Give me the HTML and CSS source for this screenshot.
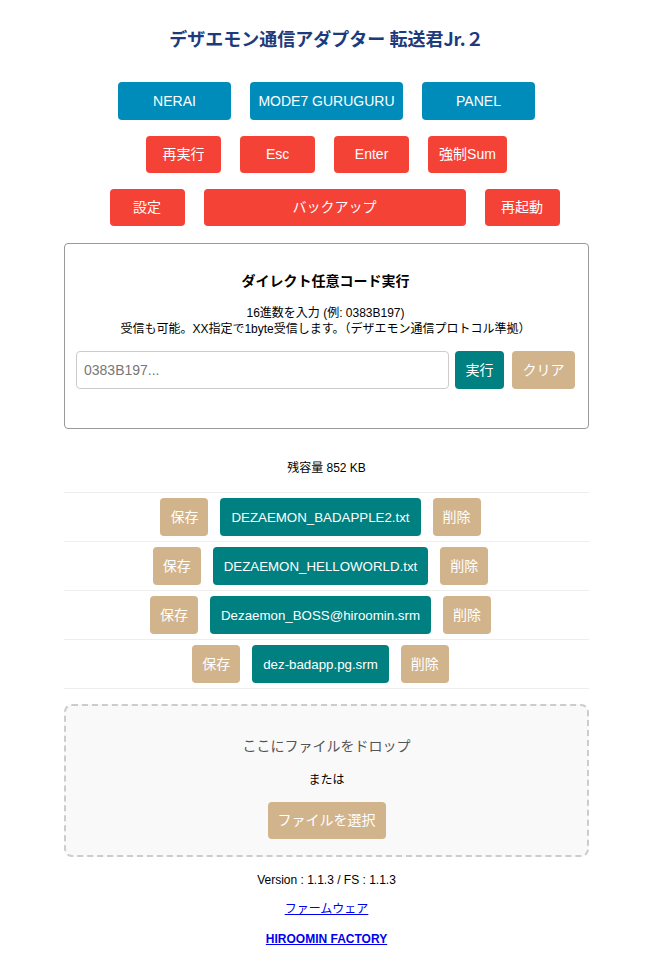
FILE: index.html
```html
<!DOCTYPE html>
<html lang="ja">
<head>
    <meta charset="UTF-8">
    <meta name="viewport" content="width=device-width, initial-scale=1.0">
    <title>転送君Jr.２</title>
    <link rel="stylesheet" href="styles.css">
</head>
<body>
    <div class="page">
        <h1 class="title">デザエモン通信アダプター 転送君Jr.２</h1>

        <div class="btn-row">
            <button class="btn btn-blue btn-main">NERAI</button>
            <button class="btn btn-blue btn-mode7">MODE7 GURUGURU</button>
            <button class="btn btn-blue btn-main">PANEL</button>
        </div>
        <div class="btn-row">
            <button class="btn btn-red btn-small">再実行</button>
            <button class="btn btn-red btn-small">Esc</button>
            <button class="btn btn-red btn-small">Enter</button>
            <button class="btn btn-red btn-small">強制Sum</button>
        </div>
        <div class="btn-row btn-row-last">
            <button class="btn btn-red btn-small">設定</button>
            <button class="btn btn-red btn-backup">バックアップ</button>
            <button class="btn btn-red btn-small">再起動</button>
        </div>

        <div class="card">
            <h3 class="card-title">ダイレクト任意コード実行</h3>
            <p class="hint">16進数を入力 (例: 0383B197)<br>受信も可能。XX指定で1byte受信します。（デザエモン通信プロトコル準拠）</p>
            <div class="code-row">
                <input type="text" class="code-input" placeholder="0383B197...">
                <button class="btn btn-teal btn-run">実行</button>
                <button class="btn btn-tan btn-clear">クリア</button>
            </div>
        </div>

        <p class="free">残容量 852 KB</p>

        <ul class="file-list">
            <li class="file-row">
                <button class="btn btn-tan">保存</button>
                <button class="btn btn-teal file-name">DEZAEMON_BADAPPLE2.txt</button>
                <button class="btn btn-tan">削除</button>
            </li>
            <li class="file-row">
                <button class="btn btn-tan">保存</button>
                <button class="btn btn-teal file-name">DEZAEMON_HELLOWORLD.txt</button>
                <button class="btn btn-tan">削除</button>
            </li>
            <li class="file-row">
                <button class="btn btn-tan">保存</button>
                <button class="btn btn-teal file-name">Dezaemon_BOSS@hiroomin.srm</button>
                <button class="btn btn-tan">削除</button>
            </li>
            <li class="file-row">
                <button class="btn btn-tan">保存</button>
                <button class="btn btn-teal file-name">dez-badapp.pg.srm</button>
                <button class="btn btn-tan">削除</button>
            </li>
        </ul>

        <div class="drop-zone">
            <p class="drop-text">ここにファイルをドロップ</p>
            <p class="drop-or">または</p>
            <button class="btn btn-tan btn-pick">ファイルを選択</button>
        </div>

        <p class="version">Version : 1.1.3 / FS : 1.1.3</p>
        <p class="link-line"><a href="#">ファームウェア</a></p>
        <p class="link-line"><a href="#"><b>HIROOMIN FACTORY</b></a></p>
    </div>
</body>
</html>
```

FILE: styles.css
```css
body {
    margin: 0;
    padding: 0 5px 0 0;
    font-family: "Liberation Sans", "Noto Sans CJK JP", sans-serif;
    color: #000;
    background: #fff;
}

.page {
    width: 525px;
    margin: 0 auto;
    padding-top: 26px;
    text-align: center;
}

.title {
    margin: 0 0 32px;
    font-family: "Noto Sans CJK JP", "Liberation Sans", sans-serif;
    font-size: 18px;
    line-height: 24px;
    font-weight: bold;
    color: #1d3b7c;
}

/* buttons */
.btn {
    border: none;
    border-radius: 4px;
    padding: 10px 11px;
    font-family: "Liberation Sans", "Noto Sans CJK JP", sans-serif;
    font-size: 14px;
    line-height: 17px;
    color: #fff;
    cursor: pointer;
}

.btn-blue { background-color: #008cba; }
.btn-red { background-color: #f44336; }
.btn-teal { background-color: #008080; }
.btn-tan { background-color: #d2b48c; }

.btn-row {
    display: flex;
    justify-content: center;
    gap: 19px;
    margin-bottom: 16px;
}

.btn-row .btn-blue {
    line-height: 18px;
}

.btn-main {
    width: 113px;
}

.btn-mode7 {
    width: 153px;
    padding: 10px 0;
}

.btn-small {
    min-width: 75px;
}

.btn-row-last {
    padding-left: 16px;
    margin-bottom: 17px;
}

.btn-backup {
    width: 262px;
}

/* direct code card */
.card {
    border: 1px solid #999;
    border-radius: 4px;
    padding: 27px 13px 39px 11px;
}

.card-title {
    margin: 0;
    font-size: 14px;
    line-height: 20px;
    font-weight: bold;
}

.hint {
    margin: 14px 0 0;
    font-size: 12px;
    line-height: 16px;
}

.code-row {
    display: flex;
    margin-top: 14px;
}

.code-input {
    flex: 1;
    min-width: 0;
    height: 38px;
    box-sizing: border-box;
    border: 1px solid #ccc;
    border-radius: 4px;
    padding: 0 7px;
    font-family: "Liberation Sans", sans-serif;
    font-size: 14px;
}

.code-input::placeholder {
    color: #777;
}

.btn-run {
    margin-left: 6px;
    width: 49px;
    padding: 0;
    height: 38px;
}

.btn-clear {
    margin-left: 8px;
    width: 63px;
    padding: 0;
    height: 38px;
}

.free {
    margin: 31px 0 16px;
    font-size: 12px;
    line-height: 16px;
}

/* file list */
.file-list {
    list-style: none;
    margin: 0;
    padding: 0;
    border-bottom: 1px solid #eee;
}

.file-row {
    display: flex;
    justify-content: center;
    border-top: 1px solid #eee;
    padding: 5px 0;
}

.file-row .btn {
    height: 38px;
    padding: 0 10px;
    margin-right: 12px;
}

.file-row .file-name {
    padding: 0 11px;
    font-size: 13.3px;
}

/* drop zone */
.drop-zone {
    margin-top: 15px;
    border: 2px dashed #ccc;
    border-radius: 8px;
    background-color: #f9f9f9;
    padding: 30px 0 16px;
}

.drop-text {
    margin: 0;
    font-size: 14px;
    line-height: 20px;
    color: #555;
}

.drop-or {
    margin: 16px 0 0;
    font-size: 12px;
    line-height: 16px;
}

.btn-pick {
    margin-top: 14px;
    height: 37px;
    padding: 0 10px;
}

.version {
    margin: 15px 0 0;
    font-size: 12px;
    line-height: 16px;
}

.link-line {
    margin: 13px 0 0;
    font-size: 12px;
    line-height: 16px;
}

.link-line + .link-line {
    margin-top: 14px;
}

.link-line a {
    color: #00e;
}
```
